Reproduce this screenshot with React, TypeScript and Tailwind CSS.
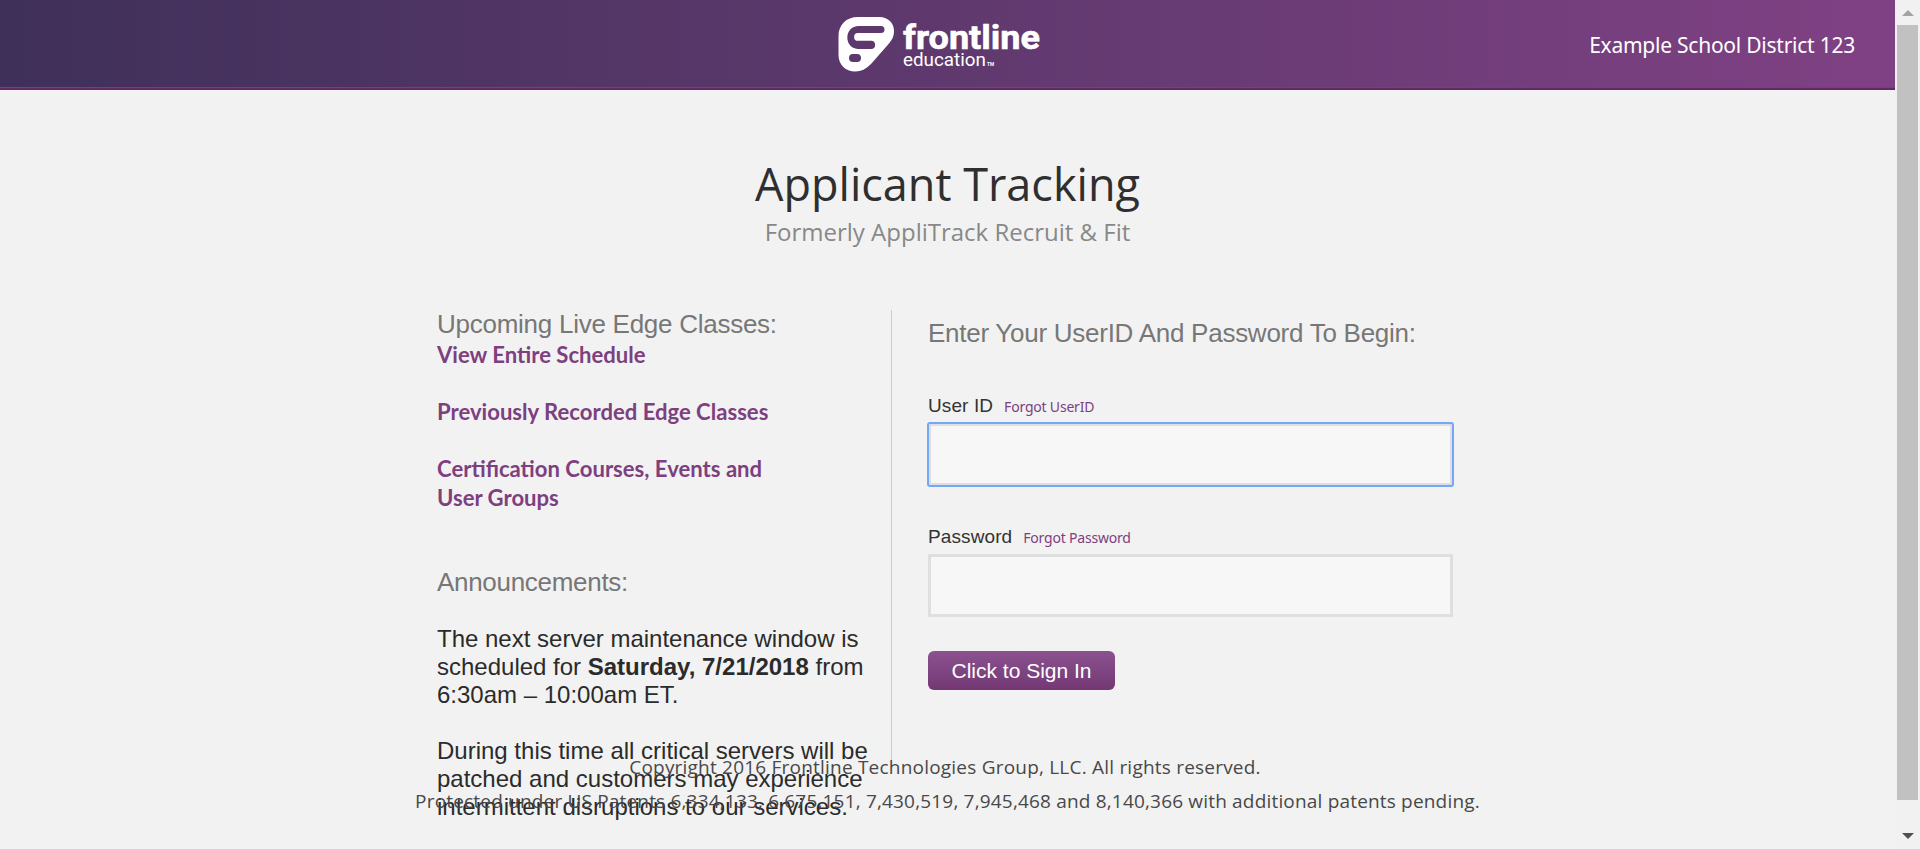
import React from "react";

const sans = "font-['Liberation_Sans',Arial,sans-serif]";

function Logo() {
  return (
    <svg width="204" height="60" viewBox="0 0 204 60" className="block" role="img" aria-label="frontline education">
      <path
        fill="#fff"
        fillRule="evenodd"
        d="M20 2H41C51 2 56.500 9 56 17C55.800 21.500 54 25 51 28.500L33 49C28 54 23 56.500 17.500 56.500C7 56.500 0.500 49 0.500 40V21C0.500 10 8 2 20 2Z
           M21 11H43A3.500 3.500 0 0 1 43 18H20A3.900 3.900 0 0 0 20 25.800H33A3.600 3.600 0 0 1 33 34H21C5.500 34 5.500 11 21 11Z
           M15 39H19A4 4 0 0 1 19 47H15A4 4 0 0 1 15 39Z"
      />
      <text x="65" y="33.500" textLength="137" lengthAdjust="spacingAndGlyphs" fill="#fff" stroke="#fff" strokeWidth="0.6" strokeLinejoin="round" className="font-[Roboto,sans-serif] text-[34px] font-bold">frontline</text>
      <text x="65" y="51" textLength="83" lengthAdjust="spacingAndGlyphs" fill="#fff" className="font-[Roboto,sans-serif] text-[19px]">education</text>
      <text x="149" y="51" textLength="7" lengthAdjust="spacingAndGlyphs" fill="#fff" className="font-[Roboto,sans-serif] text-[5px] font-bold">TM</text>
    </svg>
  );
}

function Header() {
  return (
    <header className="flex h-[90px] shrink-0 flex-col bg-linear-to-r from-[#3f3059] to-[#804184]">
      <div className="flex h-[87px] justify-between">
        <div className="pt-[15px] pl-[838px]">
          <Logo />
        </div>
        <div className="pt-[30px] pr-[40px] text-right font-['Noto_Sans',sans-serif] text-[21px] leading-[30px] text-white">
          <span className="inline-block whitespace-nowrap tracking-[-0.24px]">Example School District 123</span>
        </div>
      </div>
      <div className="h-px bg-[#7c3d7f]" />
      <div className="h-[2px] bg-[#612a64]" />
    </header>
  );
}

function Announcements() {
  return (
    <section className={`w-[454px] shrink-0 ${sans}`}>
      <h2 className="h-[30px] text-[26px] leading-[28px] tracking-[-0.26px] text-[#777]">
        <span>Upcoming Live Edge Classes:</span>
      </h2>
      <nav className="flex w-[400px] flex-col gap-[28px] font-[Lato,sans-serif] text-[22.1px] leading-[29px] font-bold text-[#7d3f80]">
        <a>View Entire Schedule</a>
        <a>Previously Recorded Edge Classes</a>
        <a>Certification Courses, Events and<br />User Groups</a>
      </nav>
      <h2 className="mt-[55px] h-[30px] text-[26px] leading-[30px] tracking-[-0.3px] text-[#777]">
        <span>Announcements:</span>
      </h2>
      <div className="mt-[28px] flex flex-col gap-[28px] text-[24px] leading-[28px] whitespace-nowrap text-[#2b2b2b]">
        <p>The next server maintenance window is<br />scheduled for <b>Saturday, 7/21/2018</b> from<br />6:30am – 10:00am ET.</p>
        <p>During this time all critical servers will be<br />patched and customers may experience<br />intermittent disruptions to our services.</p>
      </div>
    </section>
  );
}

function Field({ label, link, type, focused }: { label: string; link: string; type: string; focused?: boolean }) {
  return (
    <div>
      <div className="flex h-[34px] items-baseline gap-[11px] pt-[2px] leading-[30px]">
        <label className="text-[19px] tracking-[0.1px] text-[#333]">{label}</label>
        <a className="font-['Noto_Sans',sans-serif] text-[14px] tracking-[-0.2px] text-[#7d3f80]">{link}</a>
      </div>
      <input
        type={type}
        className={`block h-[63px] w-[525px] border-[3px] border-[#dfdfdf] bg-[#f7f7f7] ${focused ? "rounded-[2px] outline-2 -outline-offset-1 outline-[#73a7f9]" : "outline-none"}`}
      />
    </div>
  );
}

function SignIn() {
  return (
    <form className={`h-[459px] border-l border-[#ccc] pl-[36px] ${sans}`}>
      <h2 className="pt-[8px] text-[26px] leading-[30px] tracking-[-0.26px] whitespace-nowrap text-[#777]">
        <span>Enter Your UserID And Password To Begin:</span>
      </h2>
      <div className="mt-[41px] flex flex-col gap-[34px]">
        <Field label="User ID" link="Forgot UserID" type="text" focused />
        <Field label="Password" link="Forgot Password" type="password" />
      </div>
      <button type="button" className="mt-[34px] block h-[39px] w-[187px] rounded-[6px] bg-linear-to-b from-[#8b5290] to-[#733874] text-[21px] text-white">
        Click to Sign In
      </button>
    </form>
  );
}

function Scrollbar() {
  return (
    <div className="flex w-[25px] shrink-0 flex-col items-center bg-[#f1f1f1]">
      <div className="flex h-[25px] items-center justify-center">
        <svg width="12" height="6" className="block"><path d="M0 6L6 0L12 6Z" fill="#a3a3a3" /></svg>
      </div>
      <div className="h-[775px] w-[21px] bg-[#c1c1c1]" />
      <div className="flex grow items-center pt-[22px]">
        <svg width="12" height="6" className="block"><path d="M0 0L6 6L12 0Z" fill="#505050" /></svg>
      </div>
    </div>
  );
}

export default function App() {
  return (
    <div className="flex h-[849px] w-[1920px] overflow-hidden bg-[#f2f2f2]">
      <div className="relative flex h-full w-[1895px] flex-col">
        <Header />
        <div className="pt-[64px] text-center font-['Open_Sans',sans-serif]">
          <h1 className="text-[45px] leading-[60px] text-[#2f2f2f]"><span>Applicant Tracking</span></h1>
          <p className="mt-[2px] text-[24px] leading-[32px] text-[#888]"><span>Formerly AppliTrack Recruit &amp; Fit</span></p>
        </div>
        <main className="mt-[62px] flex pl-[437px]">
          <Announcements />
          <SignIn />
        </main>
        <footer className="absolute inset-x-0 top-[750px] text-center font-['Open_Sans',sans-serif] text-[19px] leading-[34px] tracking-[0.18px] text-[#484848]">
          <p className="pr-[5px] tracking-[0.21px]"><span>Copyright 2016 Frontline Technologies Group, LLC. All rights reserved.</span></p>
          <p><span>Protected under US Patents 6,334,133, 6,675,151, 7,430,519, 7,945,468 and 8,140,366 with additional patents pending.</span></p>
        </footer>
      </div>
      <Scrollbar />
    </div>
  );
}
